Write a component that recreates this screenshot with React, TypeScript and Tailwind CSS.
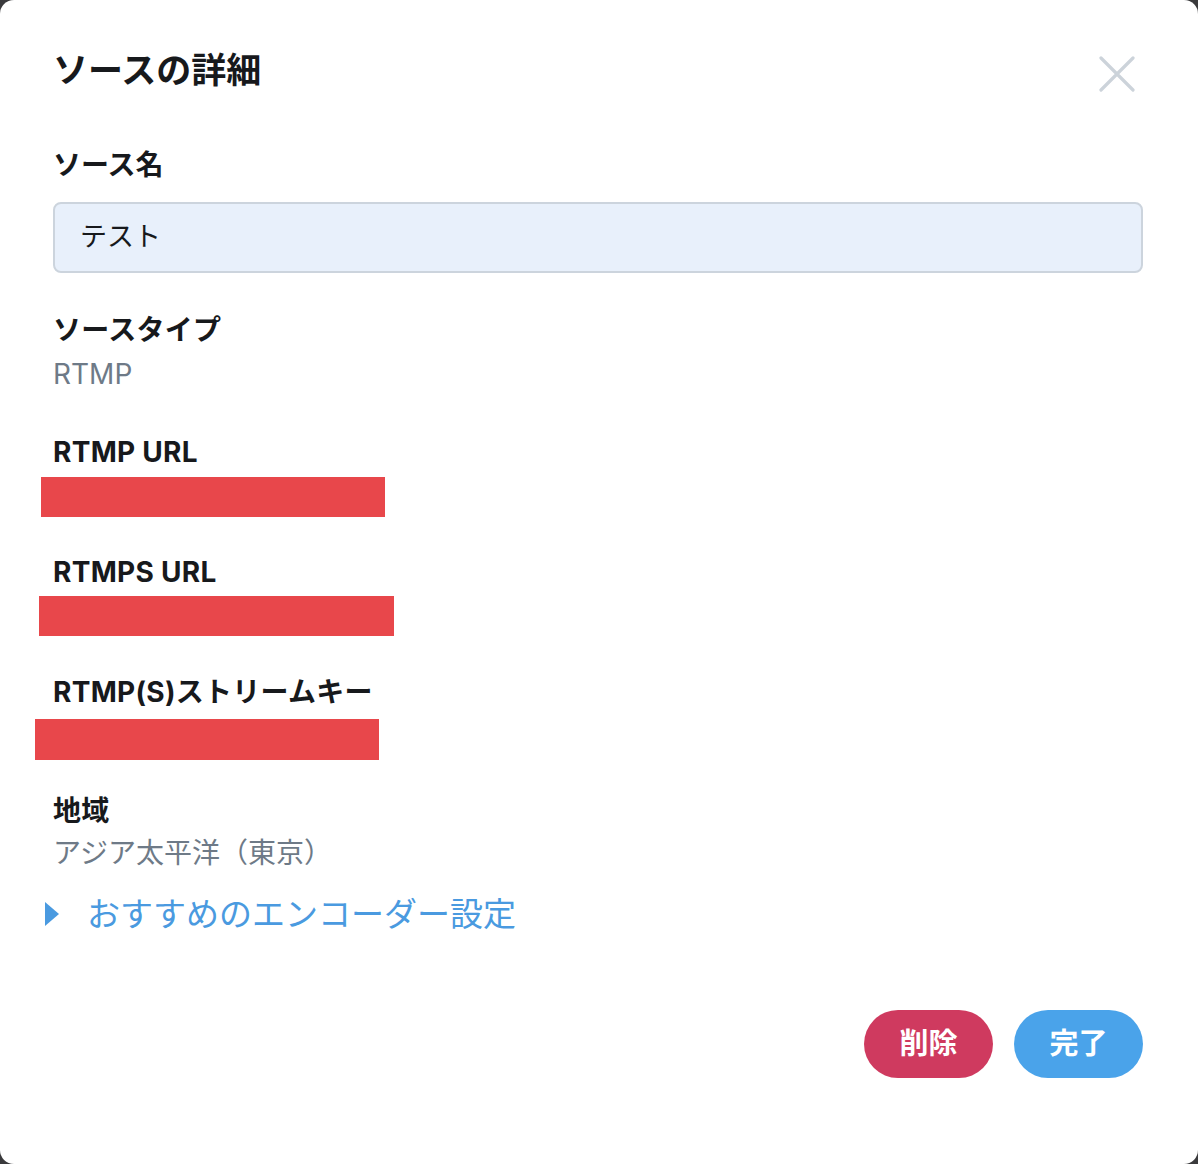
const FONT = "font-['Inter','Noto_Sans_CJK_JP',sans-serif]";

function Field({ label, children }: { label: string; children: React.ReactNode }) {
  return (
    <div>
      <div className="text-[28px] leading-[44px] font-bold text-[#17191c] tracking-[0.01em]">{label}</div>
      {children}
    </div>
  );
}

function Redacted({ className }: { className: string }) {
  return <div className={`bg-[#e8474b] ${className}`} />;
}

export default function App() {
  return (
    <div className={`w-[1198px] h-[1164px] bg-[#3a3a3c] ${FONT}`}>
      <div className="w-full h-full bg-white rounded-[14px] pl-[53px] pr-[55px] pt-[46px]">
        {/* Header */}
        <div className="flex items-center justify-between h-[48px]">
          <h1 className="text-[35px] leading-[48px] font-bold text-[#17191c]">ソースの詳細</h1>
          <button className="mr-[8px] mt-[8px] text-[#ccd3da]" aria-label="close">
            <svg width="36" height="36" viewBox="0 0 36 36" fill="none" stroke="currentColor" strokeWidth="3.2" strokeLinecap="round">
              <path d="M2 2 L34 34 M34 2 L2 34" />
            </svg>
          </button>
        </div>

        <div className="mt-[51px] text-[28px] leading-[40px] font-bold text-[#17191c]">ソース名</div>
        <div className="mt-[17px] h-[71px] rounded-[8px] border-2 border-[#ccd4dd] bg-[#e8f0fb] px-[25px] flex items-center text-[27px] text-[#17191c]">
          テスト
        </div>

        <div className="mt-[35px]">
          <Field label="ソースタイプ">
            <div className="text-[28px] leading-[44px] text-[#6e7a87]">RTMP</div>
          </Field>
        </div>

        <div className="mt-[34px]">
          <Field label="RTMP URL">
            <Redacted className="mt-[3px] -ml-[12px] w-[344px] h-[40px]" />
          </Field>
        </div>

        <div className="mt-[33px]">
          <Field label="RTMPS URL">
            <Redacted className="mt-[2px] -ml-[14px] w-[355px] h-[40px]" />
          </Field>
        </div>

        <div className="mt-[34px]">
          <Field label="RTMP(S)ストリームキー">
            <Redacted className="mt-[5px] -ml-[18px] w-[344px] h-[41px]" />
          </Field>
        </div>

        <div className="mt-[29px]">
          <Field label="地域">
            <div className="text-[28px] leading-[40px] text-[#6e7a87]">アジア太平洋（東京）</div>
          </Field>
        </div>

        <div className="mt-[21px] -ml-[8px] flex items-center h-[40px] text-[#4a9ae0]">
          <svg width="14" height="24" viewBox="0 0 14 24" className="mr-[28px]">
            <path d="M0 0 L14 12 L0 24 Z" fill="currentColor" />
          </svg>
          <span className="text-[33px] leading-[40px]">おすすめのエンコーダー設定</span>
        </div>

        <div className="mt-[76px] flex justify-end gap-[21px]">
          <button className="w-[129px] h-[68px] rounded-full bg-[#cf3a5f] text-white text-[29px] font-bold">削除</button>
          <button className="w-[129px] h-[68px] rounded-full bg-[#4aa3ea] text-white text-[29px] font-bold">完了</button>
        </div>
      </div>
    </div>
  );
}
